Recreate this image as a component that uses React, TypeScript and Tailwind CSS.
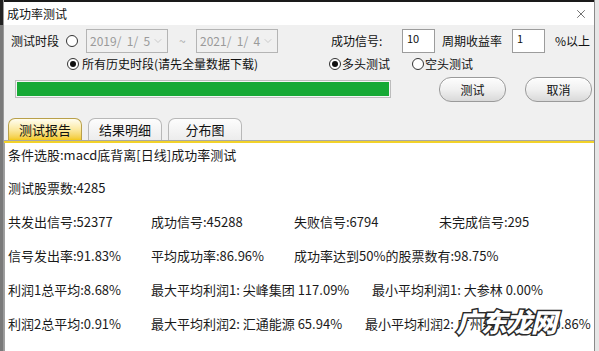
import React from "react";
import { X, ChevronDown } from "lucide-react";

const Radio: React.FC<{ checked?: boolean }> = ({ checked }) => (
  <span className="flex h-[12px] w-[12px] shrink-0 items-center justify-center rounded-full border border-[#333] bg-white">
    {checked && <span className="h-[6px] w-[6px] rounded-full bg-[#111]" />}
  </span>
);

const DateBox: React.FC<{ value: string }> = ({ value }) => (
  <div className="flex h-[24px] w-[82px] items-center justify-between border border-[#b4b4b4] bg-[#f0f0f0] pl-[3px] pr-[3px] text-[12px] text-[#9a9a9a]">
    <span className="whitespace-pre">{value}</span>
    <ChevronDown className="h-[12px] w-[12px] text-[#b0b0b0]" strokeWidth={1.2} />
  </div>
);

const NumBox: React.FC<{ value: string }> = ({ value }) => (
  <div className="h-[24px] w-[33px] border border-[#9c9c9c] bg-white pl-[4px] pt-[1px] text-[11px] leading-[14px] text-[#111]">{value}</div>
);

const PillButton: React.FC<{ label: string }> = ({ label }) => (
  <button className="flex h-[25px] w-[67px] items-center justify-center rounded-[12px] border border-[#9a9a9a] bg-gradient-to-b from-[#fdfdfd] via-[#f0f0f0] to-[#d9d9d9] text-[12px] text-[#111] shadow-[inset_0_1px_0_#fff]">
    {label}
  </button>
);

const Tab: React.FC<{ label: string; active?: boolean }> = ({ label, active }) => (
  <div
    className={`flex h-[22px] w-[74px] items-center justify-center rounded-t-[7px] border border-b-0 text-[13px] text-[#111] ${
      active
        ? "border-[#b9a04a] bg-gradient-to-b from-[#fffdf0] via-[#fbe9a0] to-[#f3c914]"
        : "border-[#b8b8b8] bg-gradient-to-b from-[#fdfdfd] to-[#ececec]"
    }`}
  >
    {label}
  </div>
);

export default function App() {
  return (
    <div
      className="relative flex h-[351px] w-[599px] overflow-hidden bg-[#d4d4d4] text-[#111]"
      style={{ fontFamily: '"Noto Sans CJK SC", "Noto Sans", sans-serif' }}
    >
      {/* background app peeking out on the left */}
      <div className="flex w-[3px] flex-col bg-[#7a7a7a]">
        <div className="h-[25px] bg-[#222]" />
      </div>

      {/* dialog window */}
      <div className="flex w-[591px] flex-col border-l border-[#9a9a9a] bg-[#f0f0f0]">
        {/* title bar */}
        <div className="flex h-[25px] items-center justify-between border-t-2 border-[#1a1a1a] bg-white pl-[3px] pr-[6px]">
          <span className="text-[12px]">成功率测试</span>
          <X className="h-[14px] w-[14px] text-[#222]" strokeWidth={1.1} />
        </div>

        {/* options */}
        <div className="flex flex-col pt-[4px]">
          <div className="flex h-[24px] items-center text-[12px]">
            <span className="ml-[7px] w-[48px]">测试时段</span>
            <span className="ml-[7px]"><Radio /></span>
            <span className="ml-[8px]"><DateBox value="2019/  1/  5" /></span>
            <span className="ml-[11px] w-[17px] text-[#aaa]">~</span>
            <DateBox value="2021/  1/  4" />
            <span className="ml-[53px] w-[60px]">成功信号:</span>
            <span className="ml-[11px]"><NumBox value="10" /></span>
            <span className="ml-[7px] w-[60px]">周期收益率</span>
            <span className="ml-[10px]"><NumBox value="1" /></span>
            <span className="ml-[10px]">%以上</span>
          </div>

          <div className="mt-[4px] flex h-[14px] items-center text-[12px]">
            <span className="ml-[63px]"><Radio checked /></span>
            <span className="ml-[3px] w-[247px]">所有历史时段(请先全量数据下载)</span>
            <Radio checked />
            <span className="ml-[1px] w-[70px]">多头测试</span>
            <Radio />
            <span className="ml-[1px]">空头测试</span>
          </div>

          <div className="mt-[6px] flex items-start">
            <div className="ml-[11px] mt-[3px] h-[18px] w-[376px] border border-[#bcbcbc] bg-[#f5f5f5] p-[1px]">
              <div className="h-full w-full bg-[#16a935]" />
            </div>
            <span className="ml-[48px]"><PillButton label="测试" /></span>
            <span className="ml-[19px]"><PillButton label="取消" /></span>
          </div>
        </div>

        {/* tabs */}
        <div className="mt-[16px] flex gap-[6px] pl-[4px]">
          <Tab label="测试报告" active />
          <Tab label="结果明细" />
          <Tab label="分布图" />
        </div>
        <div className="h-[1px] bg-[#a8a8a8]" />
        <div className="h-[2px] bg-[#f2d22a]" />

        {/* report */}
        <div className="flex flex-1 flex-col border-l border-[#a0a0a0] bg-white pl-[3px] text-[13px] text-[#1a1a1a]">
          <div className="flex h-[24px] items-center">条件选股:macd底背离[日线]成功率测试</div>
          <div className="mt-[4px] flex h-[34px] items-center">测试股票数:4285</div>
          <div className="flex h-[34px] items-center">
            <span className="w-[143px]">共发出信号:52377</span>
            <span className="w-[143px]">成功信号:45288</span>
            <span className="w-[145px]">失败信号:6794</span>
            <span>未完成信号:295</span>
          </div>
          <div className="flex h-[34px] items-center">
            <span className="w-[143px]">信号发出率:91.83%</span>
            <span className="w-[143px]">平均成功率:86.96%</span>
            <span>成功率达到50%的股票数有:98.75%</span>
          </div>
          <div className="flex h-[34px] items-center whitespace-pre">
            <span className="w-[143px]">利润1总平均:8.68%</span>
            <span className="w-[221px]">最大平均利润1: 尖峰集团 117.09%</span>
            <span>最小平均利润1: 大参林 0.00%</span>
          </div>
          <div className="flex h-[34px] items-center whitespace-pre">
            <span className="w-[143px]">利润2总平均:0.91%</span>
            <span className="w-[214px]">最大平均利润2: 汇通能源 65.94%</span>
            <span className="w-[184px]">最小平均利润2: 广州纺织</span>
            <span>-0.86%</span>
          </div>
        </div>
      </div>

      {/* background app on the right */}
      <div className="flex-1 border-l border-[#8a8a8a] bg-[#e6e6e6]" />

      {/* watermark */}
      <div className="absolute left-[456px] top-[306px] text-[26px] font-black italic leading-[30px] tracking-[-1px] text-white [-webkit-text-stroke:3px_#2a2a2a] [paint-order:stroke_fill]">
        广东龙网
      </div>
    </div>
  );
}
